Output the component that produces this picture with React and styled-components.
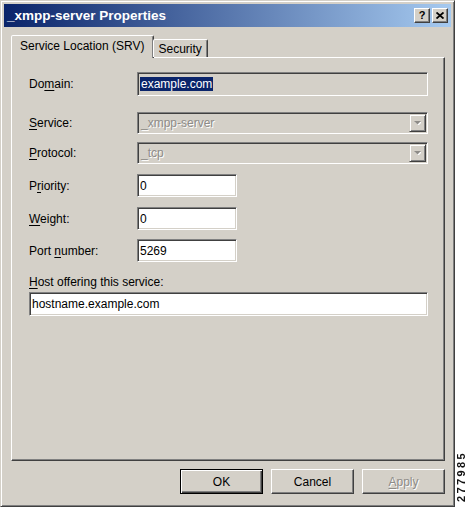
import styled, { createGlobalStyle } from 'styled-components';

const GlobalStyle = createGlobalStyle`
  html, body {
    margin: 0;
    padding: 0;
    background: #fff;
  }
  body {
    font-family: "Liberation Sans", Arial, sans-serif;
    font-size: 12px;
    color: #000;
  }
`;

const Page = styled.div`
  display: flex;
  width: 467px;
  height: 507px;
`;

const Window = styled.div`
  box-sizing: border-box;
  width: 455px;
  height: 507px;
  display: flex;
  flex-direction: column;
  padding: 3px;
  background: #d4d0c8;
  border: 1px solid;
  border-color: #d4d0c8 #404040 #404040 #d4d0c8;
  box-shadow: inset 1px 1px #fff, inset -1px -1px #808080;
`;

const TitleBar = styled.div`
  height: 23px;
  flex: none;
  display: flex;
  align-items: center;
  padding: 0 3px;
  background: linear-gradient(to right, #0a246a, #a6caf0);
  color: #fff;
  font-weight: bold;
  font-size: 13.5px;
`;

const TitleText = styled.span`
  flex: 1;
  white-space: nowrap;
`;

const CaptionButtons = styled.div`
  display: flex;
  gap: 2px;
`;

const CaptionButton = styled.div`
  box-sizing: border-box;
  width: 16px;
  height: 15px;
  display: flex;
  align-items: center;
  justify-content: center;
  background: #d4d0c8;
  border: 1px solid;
  border-color: #fff #404040 #404040 #fff;
  box-shadow: inset -1px -1px #808080;
  color: #000;
  font-size: 11px;
  font-weight: bold;
  line-height: 1;
`;

const Body = styled.div`
  flex: 1;
  display: flex;
  flex-direction: column;
  padding: 9px 6px 7px 7px;
`;

const TabStrip = styled.div`
  position: relative;
  z-index: 1;
  height: 22px;
  margin-bottom: -1px;
  display: flex;
  align-items: flex-end;
`;

const Tab = styled.div`
  box-sizing: border-box;
  height: ${(p) => (p.$active ? 23 : 18)}px;
  margin-bottom: ${(p) => (p.$active ? 0 : 1)}px;
  margin-left: ${(p) => (p.$active ? 0 : -1)}px;
  padding: 0 ${(p) => (p.$active ? 8 : 5)}px ${(p) => (p.$active ? 2 : 0)}px;
  display: flex;
  align-items: center;
  background: #d4d0c8;
  border: 1px solid;
  border-bottom: none;
  border-color: #fff #404040 transparent #fff;
  border-radius: 2px 2px 0 0;
  box-shadow: inset -1px 0 #808080;
  white-space: nowrap;
`;

const TabPanel = styled.div`
  box-sizing: border-box;
  height: 404px;
  flex: none;
  display: flex;
  flex-direction: column;
  padding: 14px 16px 0 17px;
  border: 1px solid;
  border-color: #fff #404040 #404040 #fff;
  box-shadow: inset -1px -1px #808080;
`;

const FieldRow = styled.div`
  display: flex;
  align-items: center;
  margin-top: ${(p) => p.$gap || 0}px;
`;

const Label = styled.label`
  width: 108px;
  flex: none;
  white-space: nowrap;
`;

const HostLabel = styled.label`
  display: block;
  line-height: 14px;
  margin-top: 13px;
`;

const Key = styled.u`
  text-decoration: underline;
  text-underline-offset: 2px;
`;

const sunken = `
  box-sizing: border-box;
  border: 1px solid;
  border-color: #808080 #fff #fff #808080;
  box-shadow: inset 1px 1px #404040, inset -1px -1px #d4d0c8;
`;

const ReadOnlyBox = styled.div`
  ${sunken}
  width: 291px;
  height: 24px;
  display: flex;
  align-items: center;
  padding: 0 2px;
  background: #d4d0c8;
`;

const Selected = styled.span`
  background: #0a246a;
  color: #fff;
  padding: 0 1px;
  line-height: 14px;
`;

const TextInput = styled.input`
  ${sunken}
  width: ${(p) => p.$width}px;
  height: ${(p) => p.$height || 23}px;
  margin: ${(p) => (p.$spaced ? '3px 0 0' : 0)};
  padding: 0 2px;
  background: #fff;
  font: inherit;
  color: #000;
  outline: none;
`;

const Combo = styled.div`
  ${sunken}
  width: 291px;
  height: 22px;
  display: flex;
  align-items: stretch;
  padding: 1px;
  background: #d4d0c8;
`;

const ComboText = styled.span`
  flex: 1;
  display: flex;
  align-items: center;
  padding-left: 2px;
  color: #8e8c88;
  text-shadow: 1px 1px #fff;
`;

const DropButton = styled.div`
  box-sizing: border-box;
  width: 17px;
  display: flex;
  align-items: center;
  justify-content: center;
  background: #d4d0c8;
  border: 1px solid;
  border-color: #d4d0c8 #404040 #404040 #d4d0c8;
  box-shadow: inset 1px 1px #fff, inset -1px -1px #808080;
`;

const ButtonRow = styled.div`
  display: flex;
  justify-content: flex-end;
  gap: 8px;
  margin-top: 8px;
`;

const PushButton = styled.button`
  box-sizing: border-box;
  width: 83px;
  height: 25px;
  padding: 0;
  background: #d4d0c8;
  font: inherit;
  color: ${(p) => (p.disabled ? '#8e8c88' : '#000')};
  text-shadow: ${(p) => (p.disabled ? '1px 1px #fff' : 'none')};
  border: 1px solid;
  border-color: ${(p) => (p.$default ? '#000' : '#fff #404040 #404040 #fff')};
  box-shadow: ${(p) =>
    p.$default
      ? 'inset 1px 1px #fff, inset -1px -1px #404040, inset -2px -2px #808080'
      : 'inset -1px -1px #808080'};
`;

const Side = styled.div`
  flex: 1;
  display: flex;
  align-items: flex-end;
  justify-content: center;
  padding-bottom: 5px;
`;

const FigureNumber = styled.span`
  writing-mode: vertical-rl;
  transform: rotate(180deg);
  font-size: 11px;
  font-weight: bold;
  letter-spacing: 2.4px;
  color: #111;
`;

function CloseGlyph() {
  return (
    <svg width="8" height="7" viewBox="0 0 8 7">
      <path d="M0.5 0.5 L7.5 6.5 M7.5 0.5 L0.5 6.5" stroke="#000" strokeWidth="1.8" />
    </svg>
  );
}

function Arrow() {
  return (
    <svg width="7" height="4" viewBox="0 0 7 4">
      <polygon points="1,1 8,1 4.5,4.5" fill="#fff" />
      <polygon points="0,0 7,0 3.5,3.5" fill="#8e8c88" />
    </svg>
  );
}

export default function App() {
  return (
    <>
      <GlobalStyle />
      <Page>
        <Window>
          <TitleBar>
            <TitleText>_xmpp-server Properties</TitleText>
            <CaptionButtons>
              <CaptionButton>?</CaptionButton>
              <CaptionButton>
                <CloseGlyph />
              </CaptionButton>
            </CaptionButtons>
          </TitleBar>

          <Body>
            <TabStrip>
              <Tab $active>Service Location (SRV)</Tab>
              <Tab>Security</Tab>
            </TabStrip>

            <TabPanel>
              <FieldRow>
                <Label>
                  Do<Key>m</Key>ain:
                </Label>
                <ReadOnlyBox>
                  <Selected>example.com</Selected>
                </ReadOnlyBox>
              </FieldRow>

              <FieldRow $gap={16}>
                <Label>
                  <Key>S</Key>ervice:
                </Label>
                <Combo>
                  <ComboText>_xmpp-server</ComboText>
                  <DropButton>
                    <Arrow />
                  </DropButton>
                </Combo>
              </FieldRow>

              <FieldRow $gap={8}>
                <Label>
                  <Key>P</Key>rotocol:
                </Label>
                <Combo>
                  <ComboText>_tcp</ComboText>
                  <DropButton>
                    <Arrow />
                  </DropButton>
                </Combo>
              </FieldRow>

              <FieldRow $gap={10}>
                <Label>
                  P<Key>r</Key>iority:
                </Label>
                <TextInput $width={100} defaultValue="0" />
              </FieldRow>

              <FieldRow $gap={10}>
                <Label>
                  <Key>W</Key>eight:
                </Label>
                <TextInput $width={100} defaultValue="0" />
              </FieldRow>

              <FieldRow $gap={9}>
                <Label>
                  Port <Key>n</Key>umber:
                </Label>
                <TextInput $width={100} defaultValue="5269" />
              </FieldRow>

              <HostLabel>
                <Key>H</Key>ost offering this service:
              </HostLabel>
              <TextInput $width={399} $height={24} $spaced defaultValue="hostname.example.com" />
            </TabPanel>

            <ButtonRow>
              <PushButton $default>OK</PushButton>
              <PushButton>Cancel</PushButton>
              <PushButton disabled>
                <Key>A</Key>pply
              </PushButton>
            </ButtonRow>
          </Body>
        </Window>
        <Side>
          <FigureNumber>277985</FigureNumber>
        </Side>
      </Page>
    </>
  );
}
